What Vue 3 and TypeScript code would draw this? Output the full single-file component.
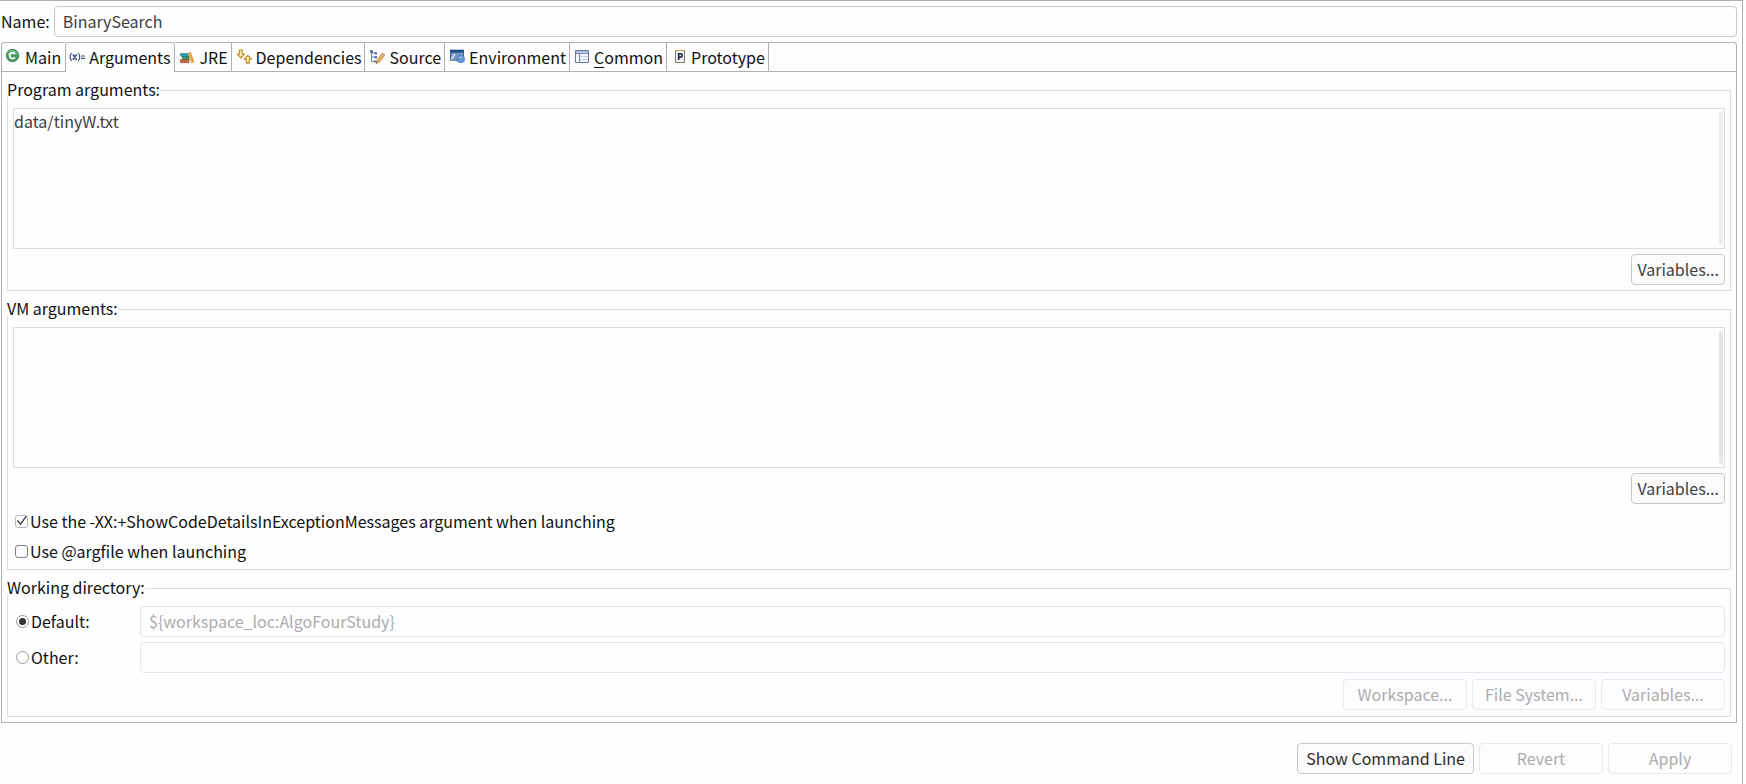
<script setup lang="ts">
import { ref } from 'vue'

interface Tab {
  id: string
  label: string
  mnemonic?: string
}

const tabs: Tab[] = [
  { id: 'main', label: 'Main' },
  { id: 'arguments', label: 'Arguments' },
  { id: 'jre', label: 'JRE' },
  { id: 'dependencies', label: 'Dependencies' },
  { id: 'source', label: 'Source' },
  { id: 'environment', label: 'Environment' },
  { id: 'common', label: 'ommon', mnemonic: 'C' },
  { id: 'prototype', label: 'Prototype' },
]

const activeTab = 'arguments'
const name = ref('BinarySearch')
const programArgs = ref('data/tinyW.txt')
const vmArgs = ref('')
const showCodeDetails = ref(true)
const useArgfile = ref(false)
const directoryMode = ref('default')
const defaultDirectory = ref('${workspace_loc:AlgoFourStudy}')
const otherDirectory = ref('')
</script>

<template>
  <main class="window">
    <div class="name-row">
      <label for="config-name">Name:</label>
      <input id="config-name" v-model="name" class="field" type="text" />
    </div>

    <div class="tab-bar" role="tablist">
      <button
        v-for="tab in tabs"
        :key="tab.id"
        class="tab"
        :class="{ active: tab.id === activeTab }"
        type="button"
        role="tab"
        :aria-selected="tab.id === activeTab"
      >
        <svg class="icon" viewBox="0 0 16 16" aria-hidden="true">
          <g v-if="tab.id === 'main'">
            <circle cx="7.500" cy="6.500" r="6.200" fill="#3f9a5c" stroke="#2b7a49" stroke-width="0.8" />
            <path d="M2.200 6a5.300 5.300 0 0 1 10.600 0z" fill="#69b57d" />
            <path d="M10 4.700A3 3 0 1 0 10 8.400" fill="none" stroke="#fff" stroke-width="1.8" />
          </g>
          <g v-else-if="tab.id === 'arguments'" fill="none" stroke="#3d4c78" stroke-width="1.2">
            <path d="M2.6 4Q-.4 8 2.6 12M9.200 4Q12.200 8 9.200 12" />
            <path d="M3.600 6h.8l2.800 4.200H8M8 6h-.8L4.400 10.200H3.600" stroke-width="1.4" />
            <path d="M12 7H16M12 9.400H16" />
          </g>
          <g v-else-if="tab.id === 'jre'" transform="translate(0 2)">
            <path d="M1.500 2.500h7.500v3H2.500L1.300 4z" fill="#2aa0b8" stroke="#14758e" stroke-width="0.6" />
            <path d="M3.500 5.500H10v3H3.500z" fill="#35976a" stroke="#1d6f51" stroke-width="0.6" />
            <path d="M1.500 8.500H10v3.200H1.500z" fill="#c56a3e" stroke="#8f4426" stroke-width="0.6" />
            <path d="M9.300 2.300l2.200-1 3.500 9.800-2.300.6z" fill="#f0b040" stroke="#c57d1e" stroke-width="0.6" />
          </g>
          <g v-else-if="tab.id === 'dependencies'" fill="#fff3c4" stroke="#c08a1e" stroke-width="1.200" stroke-linejoin="round">
            <path d="M3.500 1h2.700v4h2.200L4.900 8.800 1.300 5h2.200z" />
            <path d="M11.800 6.300l3.600 3.900h-2.200v4h-2.800v-4H8.200z" />
          </g>
          <g v-else-if="tab.id === 'source'">
            <path d="M2.500 3v9.500H6M2.500 8H6M2.500 4H6" fill="none" stroke="#6d83ad" />
            <path d="M1 1h3v3H1zM5.500 3H8v2.500H5.500zM5.500 7H8v2.500H5.500zM5 11.500h2.500v2H5z" fill="#5b79b2" />
            <path d="M7 14.500l1.200-3.800L13 4.600l2.600 2-5 6.300z" fill="#edb266" stroke="#b67733" stroke-width="0.7" />
            <path d="M12.700 4.900l1-1.300 2.300 1.800-1 1.500z" fill="#d89aa0" />
            <path d="M7 14.500l.5-1.600 1.100.9z" fill="#4d3b2b" />
          </g>
          <g v-else-if="tab.id === 'environment'">
            <path d="M1 .8h14v11H1z" fill="#3d6aa2" />
            <path d="M1 .8h14v2.300H1z" fill="#1f5188" />
            <path d="M2 4.100h12v3L6 11.300H2z" fill="#7896bd" />
            <path d="M2.500 10.300L6 4.800" stroke="#fff" stroke-width="1.200" />
            <circle cx="11.800" cy="10" r="3.800" fill="#5f97cf" stroke="#3d79b8" stroke-width="0.700" />
            <path d="M9.300 8.700q2-2 4.500-.4-1 1.800-4.500.4z" fill="#9bc2e5" />
          </g>
          <g v-else-if="tab.id === 'common'">
            <path d="M1.500 1.500h13v12h-13z" fill="#f1f5fc" stroke="#66779d" />
            <path d="M2 2h12v2H2z" fill="#b4c4e2" />
            <path d="M2 4.500h12M5.500 4.500V13" stroke="#7c8db2" />
            <path d="M6 7.500h8M6 10.500h8" stroke="#c5cfdf" />
          </g>
          <g v-else>
            <path d="M4.500 1.500h9v12h-9z" fill="#eef2fb" stroke="#827b68" />
            <path d="M4 1.500h10" stroke="#bd9d43" />
            <path d="M7.700 11V4.900h1.600q1.900 0 1.900 1.600T9.300 8.100H7.700" fill="none" stroke="#28334d" stroke-width="1.700" />
          </g>
        </svg>
        <span><u v-if="tab.mnemonic">{{ tab.mnemonic }}</u>{{ tab.label }}</span>
      </button>
      <div class="tab-filler"></div>
    </div>

    <div class="panel" role="tabpanel">
      <fieldset class="group">
        <legend>Program arguments:</legend>
        <div class="text-wrap">
          <textarea v-model="programArgs" aria-label="Program arguments"></textarea>
          <span class="thumb"></span>
        </div>
        <div class="actions">
          <button class="btn" type="button">Variables...</button>
        </div>
      </fieldset>

      <fieldset class="group roomy">
        <legend>VM arguments:</legend>
        <div class="text-wrap">
          <textarea v-model="vmArgs" aria-label="VM arguments"></textarea>
          <span class="thumb strong"></span>
        </div>
        <div class="actions">
          <button class="btn" type="button">Variables...</button>
        </div>
        <div class="checks">
          <label class="option">
            <input v-model="showCodeDetails" type="checkbox" />
            <span>Use the -XX:+ShowCodeDetailsInExceptionMessages argument when launching</span>
          </label>
          <label class="option">
            <input v-model="useArgfile" type="checkbox" />
            <span>Use @argfile when launching</span>
          </label>
        </div>
      </fieldset>

      <fieldset class="group roomy">
        <legend>Working directory:</legend>
        <div class="directories">
          <label class="option">
            <input v-model="directoryMode" type="radio" name="directory" value="default" />
            <span>Default:</span>
          </label>
          <input v-model="defaultDirectory" class="field" type="text" disabled aria-label="Default directory" />
          <label class="option">
            <input v-model="directoryMode" type="radio" name="directory" value="other" />
            <span>Other:</span>
          </label>
          <input v-model="otherDirectory" class="field" type="text" disabled aria-label="Other directory" />
        </div>
        <div class="actions directory-actions">
          <button class="btn wide" type="button" disabled>Workspace...</button>
          <button class="btn wide" type="button" disabled>File System...</button>
          <button class="btn wide" type="button" disabled>Variables...</button>
        </div>
      </fieldset>
    </div>

    <div class="footer">
      <button class="btn command" type="button">Show Command Line</button>
      <button class="btn wide" type="button" disabled>Revert</button>
      <button class="btn wide" type="button" disabled>Apply</button>
    </div>
  </main>
</template>

<style>
body {
  margin: 0;
  background: #fefefe;
}
</style>

<style scoped>
.window,
.window * {
  box-sizing: border-box;
}

.window {
  min-height: 100vh;
  margin-right: 3px;
  padding: 5px 5px 10px 1px;
  border-top: 1px solid #b0b0b0;
  border-right: 1px solid #b0b0b0;
  color: #111;
  font-family: "Noto Sans CJK SC", "Noto Sans", sans-serif;
  font-size: 16px;
  line-height: 24px;
}

button,
input,
textarea {
  margin: 0;
  color: inherit;
  font: inherit;
}

.name-row {
  display: flex;
  align-items: center;
  gap: 4px;
  margin-bottom: 5px;
}

.name-row label {
  padding-bottom: 2px;
}

.field {
  flex: 1;
  min-width: 0;
  height: 31px;
  padding: 0 8px 2px;
  border: 1px solid #c8c8c8;
  border-radius: 4px;
  background: #fefefe;
  color: #404040;
}

.field:disabled {
  border-color: #e3e6f0;
  color: #acacb0;
}

.tab-bar {
  display: flex;
  height: 30px;
}

.tab {
  display: flex;
  align-items: center;
  gap: 4px;
  padding: 0 3px 0 4px;
  border: solid #b0b0b0;
  border-width: 1px 1px 1px 0;
  background: none;
  white-space: nowrap;
}

.tab:first-child {
  padding: 0 4px 0 3px;
  border-width: 1px 0 1px 1px;
  border-top-left-radius: 4px;
}

.tab.active {
  padding: 0 4px 1px 3px;
  border-width: 1px 1px 0;
  border-radius: 4px 4px 0 0;
}

.tab u {
  text-underline-offset: 3px;
}

.icon {
  flex: none;
  width: 16px;
  height: 16px;
}

.tab-filler {
  flex: 1;
  border: solid #b0b0b0;
  border-width: 1px 1px 1px 0;
  border-top-right-radius: 4px;
}

.panel {
  display: flex;
  flex-direction: column;
  gap: 11px;
  padding: 11px 5px 5px;
  border: solid #b0b0b0;
  border-width: 0 1px 1px;
}

.group {
  min-width: 0;
  margin: 0;
  padding: 11px 5px 5px;
  border: 1px solid #dcdce1;
}

.group.roomy {
  padding-bottom: 6px;
}

.group legend {
  margin-left: -6px;
  padding: 0 0 2px;
  line-height: 12px;
}

.text-wrap {
  position: relative;
  height: 141px;
}

textarea {
  display: block;
  width: 100%;
  height: 100%;
  padding: 0;
  border: 1px solid #dcdce1;
  background: #fefefe;
  color: #404040;
  resize: none;
}

.thumb {
  position: absolute;
  top: 4px;
  right: 2px;
  bottom: 4px;
  width: 4px;
  border-radius: 2px;
  background: #eeeeef;
}

.thumb.strong {
  background: #e4e5e7;
}

.actions {
  display: flex;
  justify-content: flex-end;
  gap: 5px;
  margin-top: 5px;
}

.directory-actions {
  margin-top: 6px;
}

.btn {
  height: 31px;
  padding: 0 5px 2px;
  border: 1px solid #c8c8c8;
  border-radius: 4px;
  background: #fbfbfb;
  color: #404040;
  white-space: nowrap;
}

.btn.command {
  padding: 0 8px 2px;
  color: #2c2c2c;
}

.btn.wide {
  width: 124px;
}

.btn:disabled {
  border-color: #e6e8f2;
  background: #fdfdfd;
  color: #acacb0;
}

.checks {
  display: flex;
  flex-direction: column;
  gap: 6px;
  margin-top: 5px;
}

.option {
  display: flex;
  align-items: center;
  gap: 2px;
}

.option input {
  appearance: none;
  display: grid;
  place-items: center;
  flex: none;
  width: 13px;
  height: 13px;
  margin-left: 2px;
  border: 1px solid #808080;
  border-radius: 3px;
}

.option input[type="checkbox"]:checked {
  border-color: #b8b8b8;
}

.option input[type="checkbox"]:checked::before {
  content: "";
  width: 11px;
  height: 11px;
  background: #404040;
  clip-path: polygon(8% 50%, 18% 42%, 40% 68%, 90% 0, 100% 6%, 42% 88%);
}

.option input[type="radio"] {
  margin-left: 3px;
  border-color: #9a9a9a;
  border-radius: 50%;
}

.option input[type="radio"]:checked::before {
  content: "";
  width: 7px;
  height: 7px;
  border-radius: 50%;
  background: #333;
}

.directories {
  display: grid;
  grid-template-columns: 122px 1fr;
  align-items: center;
  column-gap: 5px;
  row-gap: 5px;
}

.directories .option span {
  padding-bottom: 2px;
}

.footer {
  display: flex;
  justify-content: flex-end;
  gap: 5px;
  margin-top: 20px;
  padding-right: 5px;
}
</style>
